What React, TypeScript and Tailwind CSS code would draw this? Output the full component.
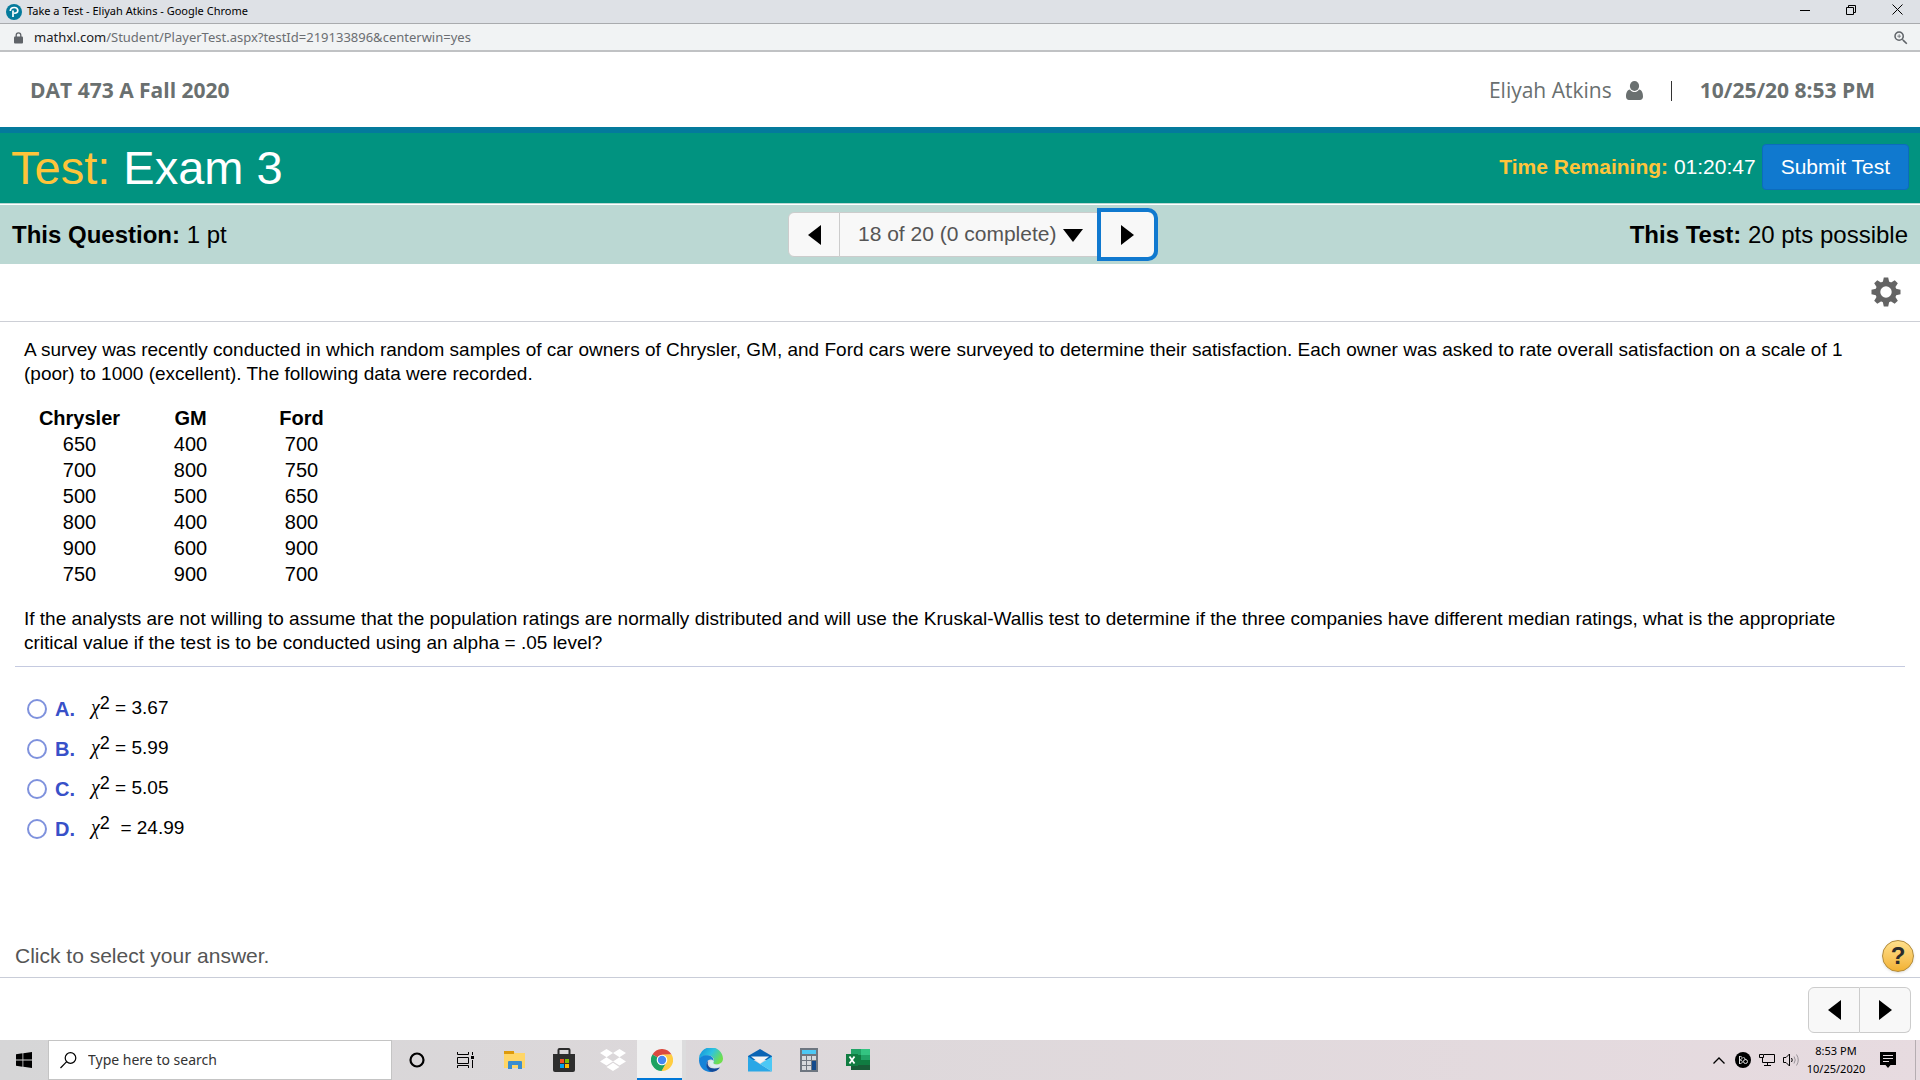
import { useState } from "react"
import { FaDropbox } from "react-icons/fa"
import { MdZoomIn } from "react-icons/md"

const RATINGS = [
    { chrysler: 650, gm: 400, ford: 700 },
    { chrysler: 700, gm: 800, ford: 750 },
    { chrysler: 500, gm: 500, ford: 650 },
    { chrysler: 800, gm: 400, ford: 800 },
    { chrysler: 900, gm: 600, ford: 900 },
    { chrysler: 750, gm: 900, ford: 700 },
]

const CHOICES = [
    { id: "A", value: "= 3.67" },
    { id: "B", value: "= 5.99" },
    { id: "C", value: "= 5.05" },
    { id: "D", value: "\u00a0= 24.99" },
]

function PearsonLogo() {
    return (
        <svg width="16" height="16" viewBox="0 0 16 16" aria-hidden="true">
            <circle cx="8" cy="8" r="8" fill="#047a9c" />
            <path d="M7 13V6.500M4.300 7C4.300 4.700 6.200 3.500 8.300 3.500c2.200 0 3.500 1.200 3.500 2.900 0 1.900-1.500 3-3.600 2.700" fill="none" stroke="#fff" strokeWidth="1.700" />
        </svg>
    )
}

function LockIcon() {
    return (
        <svg width="9" height="12" viewBox="0 0 9 12" aria-hidden="true">
            <path d="M2.200 5V3.200a2.300 2.300 0 0 1 4.600 0V5" fill="none" stroke="#5f6368" strokeWidth="1.300" />
            <rect y="4.500" width="9" height="7" rx="1" fill="#5f6368" />
        </svg>
    )
}

function UserIcon() {
    return (
        <svg width="17" height="19" viewBox="0 0 17 19" className="ml-3.5" aria-hidden="true">
            <ellipse cx="8.500" cy="5" rx="4.600" ry="5" fill="#6a7070" />
            <path d="M4 8.500C5.200 10.400 6.700 11 8.500 11S11.800 10.400 13 8.500C16 9 17 12 17 15.500C17 17.500 15.700 19 14 19H3C1.300 19 0 17.500 0 15.500C0 12 1 9 4 8.500Z" fill="#6a7070" />
        </svg>
    )
}

function GearIcon() {
    return (
        <svg width="30" height="30" viewBox="-15 -15 30 30" aria-hidden="true">
            {[0, 45, 90, 135, 180, 225, 270, 315].map(angle => (
                <path key={angle} d="M-3.400-9L-2.200-14.500H2.200L3.400-9Z" fill="#646464" transform={`rotate(${angle})`} />
            ))}
            <circle r="8.200" fill="none" stroke="#646464" strokeWidth="5" />
        </svg>
    )
}

function Triangle({ direction }: { direction: "left" | "right" | "down" }) {
    const paths = {
        left: "M13 0V20L0 10Z",
        right: "M0 0V20L13 10Z",
        down: "M0 0H20L10 13Z",
    }
    return (
        <svg width={direction === "down" ? 20 : 13} height={direction === "down" ? 13 : 20} aria-hidden="true">
            <path d={paths[direction]} fill="#000" />
        </svg>
    )
}

function BrowserBars() {
    return (
        <div className="font-['Noto_Sans','Open_Sans',sans-serif]">
            <div className="flex h-6 items-center border-b border-[#a9abae] bg-[#dee1e6] pl-1.5">
                <PearsonLogo />
                <span className="ml-[5px] flex-1 text-[11px] text-black">Take a Test - Eliyah Atkins - Google Chrome</span>
                <button type="button" aria-label="Minimize" className="flex h-full w-[46px] items-center justify-center pb-1">
                    <svg width="10" height="10"><path d="M0 5.500H10" stroke="#000" /></svg>
                </button>
                <button type="button" aria-label="Restore" className="flex h-full w-[46px] items-center justify-center pb-1">
                    <svg width="10" height="10" fill="none" stroke="#000"><path d="M.5 2.500H7.500V9.500H.5ZM2.500 2V.5H9.500V7.500H8" /></svg>
                </button>
                <button type="button" aria-label="Close" className="flex h-full w-[46px] items-center justify-center pb-1">
                    <svg width="11" height="11"><path d="M.5.5L10.500 10.500M10.500.5L.5 10.500" stroke="#000" /></svg>
                </button>
            </div>
            <div className="flex h-7 items-center border-b-2 border-[#c0c2c4] bg-[#f1f3f4] pt-0.5 pr-2.5 pl-3.5">
                <LockIcon />
                <span className="ml-[11px] flex-1 text-[13px] text-[#6b6e72]">
                    <span className="text-[#202124]">mathxl.com</span>/Student/PlayerTest.aspx?testId=219133896&amp;centerwin=yes
                </span>
                <button type="button" aria-label="Zoom" className="text-[#5f6368]">
                    <MdZoomIn className="size-[18px]" />
                </button>
            </div>
        </div>
    )
}

function CourseHeader() {
    return (
        <header className="flex h-[75px] items-center justify-between pt-0.5 pr-[45px] pl-[30px] font-['Open_Sans',sans-serif] text-[21px] text-[#6a7070]">
            <span className="font-bold">DAT 473 A Fall 2020</span>
            <div className="flex items-center">
                <span>Eliyah Atkins</span>
                <UserIcon />
                <span className="mx-7 h-5 w-px bg-[#333]" />
                <span className="font-bold">10/25/20 8:53 PM</span>
            </div>
        </header>
    )
}

function TestBar() {
    return (
        <div className="flex h-[77px] items-center justify-between border-t-[6px] border-b border-t-[#047a9c] border-b-[#bbd8d3] bg-[#019380] pr-[11px] pb-0.5 pl-[11px]">
            <h1 className="text-[47px] leading-none text-white">
                <span className="text-[#ffc43a]">Test:</span> Exam 3
            </h1>
            <div className="flex items-center text-[21px] text-white">
                <span className="mr-1.5">
                    <b className="text-[#ffc43a]">Time Remaining:</b> 01:20:47
                </span>
                <button type="button" className="h-[46px] rounded border border-[#0c6cbd] bg-[#1079cf] px-[18px]">Submit Test</button>
            </div>
        </div>
    )
}

function QuestionBar() {
    return (
        <div className="mt-px grid h-[59px] grid-cols-[1fr_auto_1fr] items-center bg-[#bbd8d3] px-3 text-2xl text-black">
            <span><b>This Question:</b> 1 pt</span>
            <div className="ml-[22px] flex h-[45px] items-stretch">
                <button type="button" aria-label="Previous question" className="flex w-[52px] items-center justify-center rounded-l-md border border-[#ccc] bg-[#f8f8f8]">
                    <Triangle direction="left" />
                </button>
                <div className="relative flex">
                    <select aria-label="Question" className="w-[261px] appearance-none border-y border-[#ccc] bg-[#f8f8f8] pb-0.5 pl-[18px] text-[21px] text-[#555]">
                        <option>18 of 20 (0 complete)</option>
                    </select>
                    <span className="pointer-events-none absolute inset-y-0 right-[18px] flex items-center pt-0.5">
                        <Triangle direction="down" />
                    </span>
                </div>
                <button type="button" aria-label="Next question" className="z-10 flex w-[53px] items-center justify-center rounded-r-md bg-[#f8f8f8] outline-4 outline-[#1079cf]">
                    <Triangle direction="right" />
                </button>
            </div>
            <span className="text-right"><b>This Test:</b> 20 pts possible</span>
        </div>
    )
}

function RatingsTable() {
    return (
        <table className="mt-[19px] w-[333px] table-fixed text-center text-xl leading-[26px]">
            <thead>
                <tr>
                    <th className="p-0">Chrysler</th>
                    <th className="p-0">GM</th>
                    <th className="p-0">Ford</th>
                </tr>
            </thead>
            <tbody>
                {RATINGS.map((row, index) => (
                    <tr key={index}>
                        <td className="p-0">{row.chrysler}</td>
                        <td className="p-0">{row.gm}</td>
                        <td className="p-0">{row.ford}</td>
                    </tr>
                ))}
            </tbody>
        </table>
    )
}

function Question() {
    const [answer, setAnswer] = useState("")

    return (
        <main className="flex-1 px-[15px] pt-4 text-[19px] leading-6 text-black">
            <div className="border-b border-[#c5cae0] pr-5 pb-[11px] pl-[9px]">
                <p>
                    A survey was recently conducted in which random samples of car owners of Chrysler, GM, and Ford cars were surveyed to determine their satisfaction. Each owner was asked to rate overall satisfaction on a scale of 1 (poor) to 1000 (excellent). The following data were recorded.
                </p>
                <RatingsTable />
                <p className="mt-5">
                    If the analysts are not willing to assume that the population ratings are normally distributed and will use the Kruskal-Wallis test to determine if the three companies have different median ratings, what is the appropriate critical value if the test is to be conducted using an alpha = .05 level?
                </p>
            </div>
            <fieldset className="mt-[22px] pl-3">
                {CHOICES.map(choice => (
                    <label key={choice.id} className="flex h-10 items-center">
                        <input
                            type="radio"
                            name="answer"
                            value={choice.id}
                            checked={answer === choice.id}
                            onChange={() => setAnswer(choice.id)}
                            className="size-5 appearance-none rounded-full border-2 border-[#7f92dd] bg-white checked:border-[6px]"
                        />
                        <span className="ml-2 w-9 text-xl font-bold text-[#3850c8]">{choice.id}.</span>
                        <span className="pb-1">
                            <span className="font-['Liberation_Serif',serif] text-xl italic">χ</span>
                            <sup className="static align-[5px] text-lg leading-none">2</sup> {choice.value}
                        </span>
                    </label>
                ))}
            </fieldset>
        </main>
    )
}

function AnswerFooter() {
    return (
        <footer>
            <div className="flex h-[43px] items-center justify-between border-b border-[#c9cdd8] pr-1.5 pl-[15px] text-[21px] text-[#555]">
                <span>Click to select your answer.</span>
                <button type="button" aria-label="Help" className="size-8 rounded-full border border-[#b08a3c] bg-linear-to-b from-[#ffe08a] to-[#f2b230] text-2xl leading-none font-bold text-[#2b2b2b] shadow">?</button>
            </div>
            <div className="flex h-[62px] items-center justify-end pt-0.5 pr-[9px]">
                <button type="button" aria-label="Previous" className="flex h-[46px] w-[52px] items-center justify-center rounded-l-md border border-[#ccc] bg-[#f8f8f8]">
                    <Triangle direction="left" />
                </button>
                <button type="button" aria-label="Next" className="flex h-[46px] w-[51px] items-center justify-center rounded-r-md border border-l-0 border-[#ccc] bg-[#f8f8f8]">
                    <Triangle direction="right" />
                </button>
            </div>
        </footer>
    )
}

const TASKBAR_APPS = [
    {
        name: "Cortana",
        icon: <svg width="24" height="24"><circle cx="12" cy="12" r="6.500" fill="none" stroke="#000" strokeWidth="2.200" /></svg>,
    },
    {
        name: "Task View",
        icon: (
            <svg width="17" height="16" fill="none" stroke="#000">
                <path d="M.5 0V2.500H11.500V0M.5 5.500H11.500V11.500H.5ZM.5 16V13.500H11.500V16M15.500 0V3M15.500 8V16" />
                <path d="M14 4H17V7H14Z" fill="#000" stroke="none" />
            </svg>
        ),
    },
    {
        name: "File Explorer",
        icon: (
            <svg width="24" height="24">
                <path d="M1 3H10L12 5H22V20H1Z" fill="#ffd667" />
                <path d="M1 3H11V6H1Z" fill="#dd9a0c" />
                <path d="M5 21V14Q5 13 6 13H18Q19 13 19 14V21H15V17H9V21Z" fill="#3b8ed0" />
            </svg>
        ),
    },
    {
        name: "Microsoft Store",
        icon: (
            <svg width="24" height="24">
                <path d="M6.500 6V2Q6.500 1 7.500 1H16.500Q17.500 1 17.500 2V6" fill="none" stroke="#2b2b2b" strokeWidth="2" />
                <path d="M1 6H23V22Q23 24 21 24H3Q1 24 1 22Z" fill="#2e2e2e" />
                <path d="M8 11H12V15H8Z" fill="#f25022" />
                <path d="M13 11H17V15H13Z" fill="#7fba00" />
                <path d="M8 16H12V20H8Z" fill="#00a4ef" />
                <path d="M13 16H17V20H13Z" fill="#ffb900" />
            </svg>
        ),
    },
    {
        name: "Dropbox",
        icon: <FaDropbox className="size-[26px] text-white" />,
    },
    {
        name: "Google Chrome",
        active: true,
        icon: (
            <svg width="22" height="22" viewBox="-11 -11 22 22">
                <path d="M0 0L-9.530-5.500A11 11 0 0 1 9.530-5.500L0-5Z" fill="#db4a3f" />
                <path d="M-9.530-5.500A11 11 0 0 0 0 11L4.800 2L0 0Z" fill="#1da261" />
                <path d="M9.530-5.500A11 11 0 0 1-.5 11L4.500 2.500L0-5.400Z" fill="#ffcd42" />
                <circle r="5.300" fill="#fff" />
                <circle r="4.200" fill="#4688f1" />
            </svg>
        ),
    },
    {
        name: "Microsoft Edge",
        icon: (
            <svg width="24" height="24" viewBox="0 0 24 24">
                <defs>
                    <linearGradient id="edgeTop" x1="0" y1="0" x2="1" y2="0.5">
                        <stop offset="0.1" stopColor="#1597dc" />
                        <stop offset="0.55" stopColor="#2fc3e0" />
                        <stop offset="1" stopColor="#6fdf4e" />
                    </linearGradient>
                </defs>
                <path d="M0 12A12 12 0 0 1 24 10.500C24 15 20 16.500 17 16.300C14.500 16 13.800 15 14.500 14C16 11.500 14 8 10 7.500C5.500 7 1.500 9 0 12Z" fill="url(#edgeTop)" />
                <path d="M0 12C1 8.500 5 6.800 9 7.300C13 7.800 15 10.500 14.300 13C13 11 9.500 11 8 14C6.500 18 9.500 22.500 13.500 23.900C6 25 0 19.500 0 12Z" fill="#1583d8" />
                <path d="M9.200 12.800C7 18.500 12 22.500 21 19.500Q18 23.600 13 24C7.500 22.500 5.500 16 9.200 12.800Z" fill="#114a9b" />
                <path d="M14.500 14C13.500 15 14.500 17 17.500 17.200C20 17.300 22 16 22.800 15.500C20 21 13 21 10.800 17C9.500 14 12 11.500 14.300 13Z" fill="#d9edf2" />
            </svg>
        ),
    },
    {
        name: "Mail",
        icon: (
            <svg width="24" height="24">
                <path d="M0 8L12 1L24 8V12H0Z" fill="#0a64b4" />
                <path d="M0 8.500L24 23.500H0Z" fill="#2aa7e6" />
                <path d="M24 8.500V23.500L12 16Z" fill="#4cc8f5" />
                <path d="M3 8.500H21L12 15.500Z" fill="#f4f4f4" />
            </svg>
        ),
    },
    {
        name: "Calculator",
        icon: (
            <svg width="18" height="24">
                <path d="M0 0H18V24H0Z" fill="#6e7680" />
                <path d="M2 2H16V6H2Z" fill="#4cc8f5" />
                <path d="M2 8H6V12H2ZM7 8H11V12H7ZM12 8H16V12H12ZM2 13H6V17H2ZM7 13H11V17H7ZM2 18H6V22H2ZM7 18H11V22H7Z" fill="#d5d9dd" />
                <path d="M12 13H16V22H12Z" fill="#134a8c" />
            </svg>
        ),
    },
    {
        name: "Excel",
        icon: (
            <svg width="26" height="24">
                <path d="M6 1H16V8H6Z" fill="#21a366" />
                <path d="M16 1H25V7H16Z" fill="#33c481" />
                <path d="M6 7H16V17H6Z" fill="#107c41" />
                <path d="M16 7H25V12H16Z" fill="#21a366" />
                <path d="M16 12H25V17H16Z" fill="#107c41" />
                <path d="M6 17H25V22H6Z" fill="#185c37" />
                <path d="M1 6H13V18H1Z" fill="#107c41" />
                <path d="M4.500 8.500L9.500 15.500M9.500 8.500L4.500 15.500" stroke="#fff" strokeWidth="1.800" />
            </svg>
        ),
    },
]

function SystemTray() {
    return (
        <div className="flex items-center">
            <button type="button" aria-label="Show hidden icons" className="flex w-6 justify-center">
                <svg width="12" height="7"><path d="M.5 6.500L6 1L11.500 6.500" fill="none" stroke="#000" strokeWidth="1.300" /></svg>
            </button>
            <button type="button" aria-label="Audio control" className="flex w-6 justify-center">
                <svg width="16" height="16" fill="none" stroke="#ddd">
                    <circle cx="8" cy="8" r="8" fill="#000" stroke="none" />
                    <path d="M4.500 4V12M4.500 4.500C8 4 8 7.500 4.500 8C8.500 8 8 12 4.500 11.500M8.500 5L11 8" />
                    <circle cx="10.500" cy="9.500" r="2" />
                </svg>
            </button>
            <button type="button" aria-label="Network" className="flex w-6 justify-center">
                <svg width="16" height="14" fill="none" stroke="#000">
                    <path d="M5 1.500H15.500V9.500H3.500V5M8.500 10V12.500M5 12.500H12M.5 1.500H4.500V4.500H.5Z" />
                </svg>
            </button>
            <button type="button" aria-label="Volume" className="flex w-6 justify-center">
                <svg width="17" height="14" fill="none" stroke="#000">
                    <path d="M.5 4.500H3L6.500 1V13L3 9.500H.5ZM8.500 5Q10 7 8.500 9" />
                    <path d="M11 3.500Q13.500 7 11 10.500M13.500 1.500Q17 7 13.500 12.500" stroke="#99949a" />
                </svg>
            </button>
            <div className="w-[66px] text-center text-[11px] leading-[18px] whitespace-nowrap text-black">
                <div>8:53 PM</div>
                <div>10/25/2020</div>
            </div>
            <button type="button" aria-label="Notifications" className="flex w-[38px] justify-center">
                <svg width="16" height="16">
                    <path d="M0 0H16V13H10.500L8 16L5.500 13H0Z" fill="#000" />
                    <path d="M3 3.500H13M3 6.500H13M3 9.500H9" stroke="#e5dbdf" />
                </svg>
            </button>
            <div className="ml-2 h-10 w-[5px] border-l border-[#b5adb1]" />
        </div>
    )
}

function Taskbar() {
    return (
        <nav className="flex h-10 items-center bg-linear-to-r from-[#d6d6d7] to-[#e7dbe0] font-['Noto_Sans','Open_Sans',sans-serif]">
            <button type="button" aria-label="Start" className="flex w-12 justify-center">
                <svg width="16" height="16" fill="#000">
                    <path d="M0 2.200L6.500 1.300V7.500H0ZM7.300 1.200L16 0V7.500H7.300ZM0 8.500H6.500V14.700L0 13.800ZM7.300 8.500H16V16L7.300 14.800Z" />
                </svg>
            </button>
            <label className="flex h-10 w-[344px] items-center border border-[#c4c4c4] bg-white pl-[11px]">
                <svg width="17" height="17" fill="none" stroke="#000" strokeWidth="1.200">
                    <circle cx="10.500" cy="6" r="5.300" />
                    <path d="M6.700 9.700L.5 16" />
                </svg>
                <input type="text" aria-label="Search" placeholder="Type here to search" className="ml-[11px] w-60 text-sm outline-none placeholder:text-[#333]" />
            </label>
            <div className="flex flex-1">
                {TASKBAR_APPS.map(app => (
                    <button
                        key={app.name}
                        type="button"
                        aria-label={app.name}
                        className={app.active
                            ? "flex h-10 w-[49px] items-center justify-center border-r-4 border-r-[#dcdcdd] bg-[#f1f1f1] pl-1 shadow-[inset_0_-2px_#0078d7]"
                            : "flex h-10 w-[49px] items-center justify-center"}
                    >
                        {app.icon}
                    </button>
                ))}
            </div>
            <SystemTray />
        </nav>
    )
}

export default function App() {
    return (
        <div className="flex min-h-screen flex-col bg-white font-['Liberation_Sans',Arial,sans-serif]">
            <BrowserBars />
            <CourseHeader />
            <TestBar />
            <QuestionBar />
            <div className="flex h-[58px] items-center justify-end border-b border-[#cdcfd6] pr-[19px] pb-0.5">
                <button type="button" aria-label="Settings">
                    <GearIcon />
                </button>
            </div>
            <Question />
            <AnswerFooter />
            <Taskbar />
        </div>
    )
}
